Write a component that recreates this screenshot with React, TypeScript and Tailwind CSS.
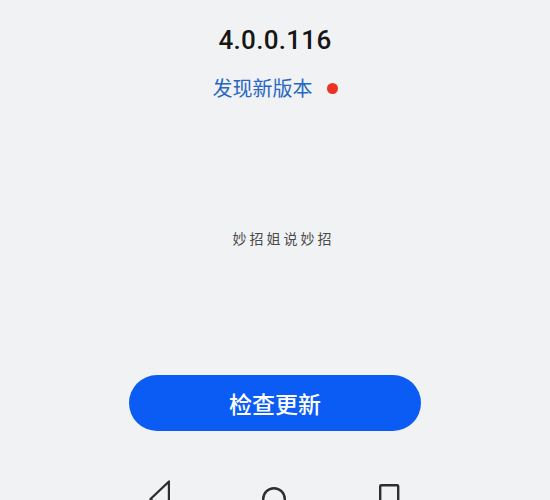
export default function App() {
  return (
    <div
      className="w-[550px] h-[500px] overflow-hidden bg-[#f1f2f4] flex flex-col items-center"
      style={{ fontFamily: '"Noto Sans", "Noto Sans CJK SC", sans-serif' }}
    >
      <div className="shrink-0 pt-[25px] text-[26px] leading-[30px] font-medium text-[#161616] [font-family:Roboto,sans-serif] tracking-[0.3px]">
        4.0.0.116
      </div>

      <div className="shrink-0 mt-[21px] flex items-center h-[24px]">
        <span className="text-[20px] leading-[24px] text-[#2767c2] [font-family:'Noto_Sans_CJK_SC',sans-serif]">
          发现新版本
        </span>
        <span className="ml-[14px] w-[11px] h-[11px] rounded-full bg-[#ea3323]" />
      </div>

      <div className="shrink-0 mt-[128px] h-[20px] text-[14px] leading-[20px] tracking-[3px] text-[#4a4a4a] pl-[17px] [font-family:'Noto_Sans_CJK_SC',sans-serif]">
        妙招姐说妙招
      </div>

      <button className="shrink-0 mt-[127px] w-[292px] h-[56px] rounded-full bg-[#0b5cf4] text-white text-[23px] font-medium leading-none flex items-center justify-center [font-family:'Noto_Sans_CJK_SC',sans-serif]">
        检查更新
      </button>

      <nav className="shrink-0 mt-[49px] w-full flex items-start pl-[148px] gap-[91px]">
        <svg width="22" height="40" viewBox="0 0 22 40" fill="none">
          <path d="M21 1.5 L2.5 19 L21 36.5 Z" stroke="#2e2e2e" strokeWidth="2.4" strokeLinejoin="round" />
        </svg>
        <svg className="mt-[6px]" width="26" height="26" viewBox="0 0 26 26" fill="none">
          <circle cx="13" cy="13" r="10.8" stroke="#2e2e2e" strokeWidth="2.4" />
        </svg>
        <svg className="mt-[4px]" width="22" height="24" viewBox="0 0 22 24" fill="none">
          <rect x="2.2" y="1.2" width="18" height="20" rx="1" stroke="#2e2e2e" strokeWidth="2.4" />
        </svg>
      </nav>
    </div>
  );
}
